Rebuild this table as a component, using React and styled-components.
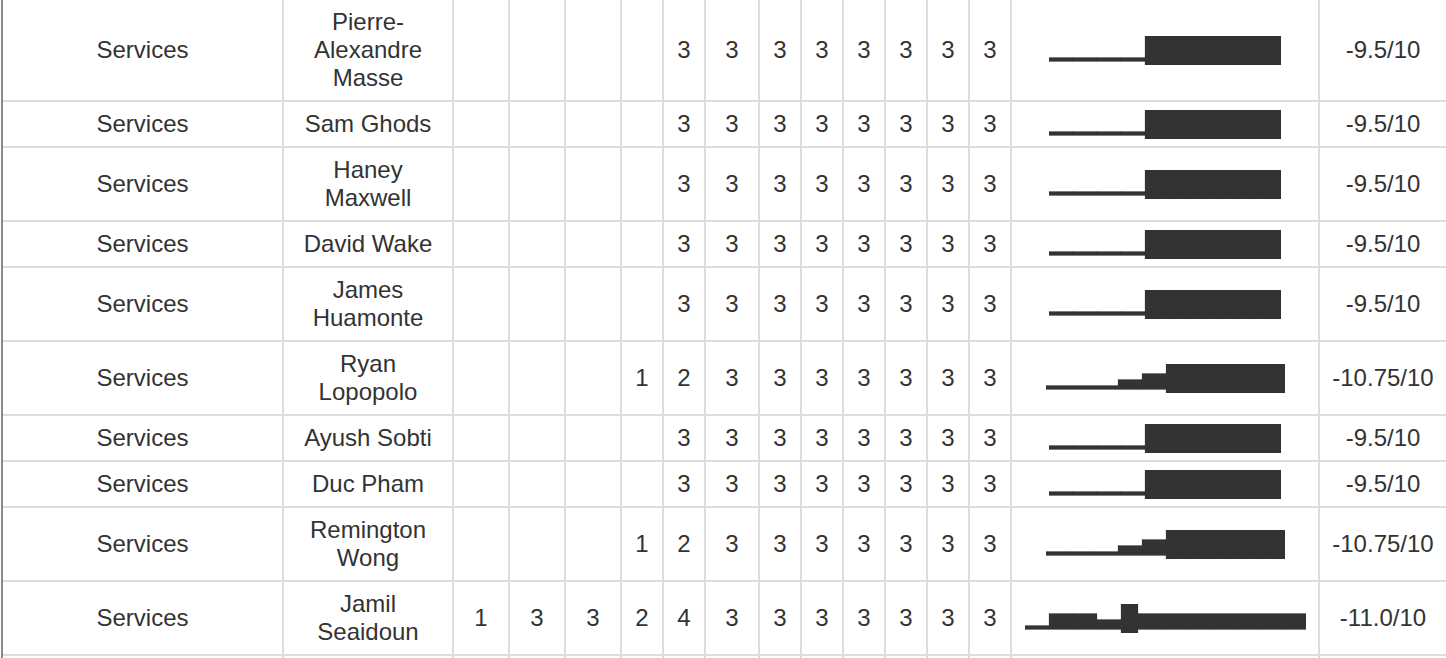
import React from "react";
import styled, { createGlobalStyle } from "styled-components";

const GlobalStyle = createGlobalStyle`
  html, body {
    margin: 0;
    padding: 0;
    background: #fff;
    overflow: hidden;
  }
  body {
    font-family: "Liberation Sans", Arial, Helvetica, sans-serif;
    color: #333;
  }
`;

// widths of each column, border included
const COLUMNS = [281, 170, 56, 56, 56, 42, 42, 54, 42, 42, 42, 42, 42, 42, 308, 126];

const ROWS = [
  { team: "Services", name: "Pierre-Alexandre Masse", values: [null, null, null, null, 3, 3, 3, 3, 3, 3, 3, 3], score: "-9.5/10" },
  { team: "Services", name: "Sam Ghods", values: [null, null, null, null, 3, 3, 3, 3, 3, 3, 3, 3], score: "-9.5/10" },
  { team: "Services", name: "Haney Maxwell", values: [null, null, null, null, 3, 3, 3, 3, 3, 3, 3, 3], score: "-9.5/10" },
  { team: "Services", name: "David Wake", values: [null, null, null, null, 3, 3, 3, 3, 3, 3, 3, 3], score: "-9.5/10" },
  { team: "Services", name: "James Huamonte", values: [null, null, null, null, 3, 3, 3, 3, 3, 3, 3, 3], score: "-9.5/10" },
  { team: "Services", name: "Ryan Lopopolo", values: [null, null, null, 1, 2, 3, 3, 3, 3, 3, 3, 3], score: "-10.75/10" },
  { team: "Services", name: "Ayush Sobti", values: [null, null, null, null, 3, 3, 3, 3, 3, 3, 3, 3], score: "-9.5/10" },
  { team: "Services", name: "Duc Pham", values: [null, null, null, null, 3, 3, 3, 3, 3, 3, 3, 3], score: "-9.5/10" },
  { team: "Services", name: "Remington Wong", values: [null, null, null, 1, 2, 3, 3, 3, 3, 3, 3, 3], score: "-10.75/10" },
  { team: "Services", name: "Jamil Seaidoun", values: [1, 3, 3, 2, 4, 3, 3, 3, 3, 3, 3, 3], score: "-11.0/10" },
];

const Page = styled.div`
  padding-left: 1px;
`;

const Frame = styled.div`
  border-left: 2px solid #8a8a8a;
`;

const Table = styled.table`
  width: 1443px;
  table-layout: fixed;
  border-collapse: separate;
  border-spacing: 0;
`;

const Col = styled.col`
  width: ${(p) => p.$w}px;
`;

const Cell = styled.td`
  box-sizing: border-box;
  height: 46px;
  padding: ${(p) => (p.$chart ? 0 : 8)}px ${(p) => (p.$narrow ? 2 : 8)}px;
  border-right: 2px solid #ddd;
  border-bottom: 2px solid #ddd;
  text-align: center;
  vertical-align: middle;
  font-size: 24px;
  line-height: 28px;
  color: #333;

  &:last-child {
    border-right: none;
  }
`;

const ChartSvg = styled.svg`
  display: block;
  margin: 0 auto;
`;

const BAR_W = 24;
const PEAK_W = 17;
const PEAK_H = 29;
const BASE = 25.5;

function Spark({ values }) {
  const vals = values.map((v) => (v == null ? 0 : v));
  const min = Math.min(...vals);
  const max = Math.max(...vals);
  let x = 0;
  const bars = vals.map((v, i) => {
    const peak = v === max;
    const w = peak ? PEAK_W : BAR_W;
    const h = peak ? PEAK_H : 4 + 6 * (v - min);
    const y = peak ? 0 : BASE - h;
    const rect = (
      <rect key={i} x={x} y={y} width={w} height={h} fill="#333" stroke="#373737" strokeWidth={0.25} />
    );
    x += w;
    return rect;
  });

  return (
    <ChartSvg width={x} height={PEAK_H} viewBox={`0 0 ${x} ${PEAK_H}`}>
      {bars}
    </ChartSvg>
  );
}

const App = () => {
  return (
    <Page>
      <GlobalStyle />
      <Frame>
        <Table>
          <colgroup>
            {COLUMNS.map((w, i) => (
              <Col key={i} $w={w} />
            ))}
          </colgroup>
          <tbody>
            {ROWS.map((row, i) => (
              <tr key={i}>
                <Cell>{row.team}</Cell>
                <Cell>{row.name}</Cell>
                {row.values.map((v, j) => (
                  <Cell key={j} $narrow>
                    {v ?? ""}
                  </Cell>
                ))}
                <Cell $chart>
                  <Spark values={row.values} />
                </Cell>
                <Cell $narrow>{row.score}</Cell>
              </tr>
            ))}
            {/* next row, scrolled out of view */}
            <tr>
              {COLUMNS.map((w, i) => (
                <Cell key={i} />
              ))}
            </tr>
          </tbody>
        </Table>
      </Frame>
    </Page>
  );
};

export default App;
